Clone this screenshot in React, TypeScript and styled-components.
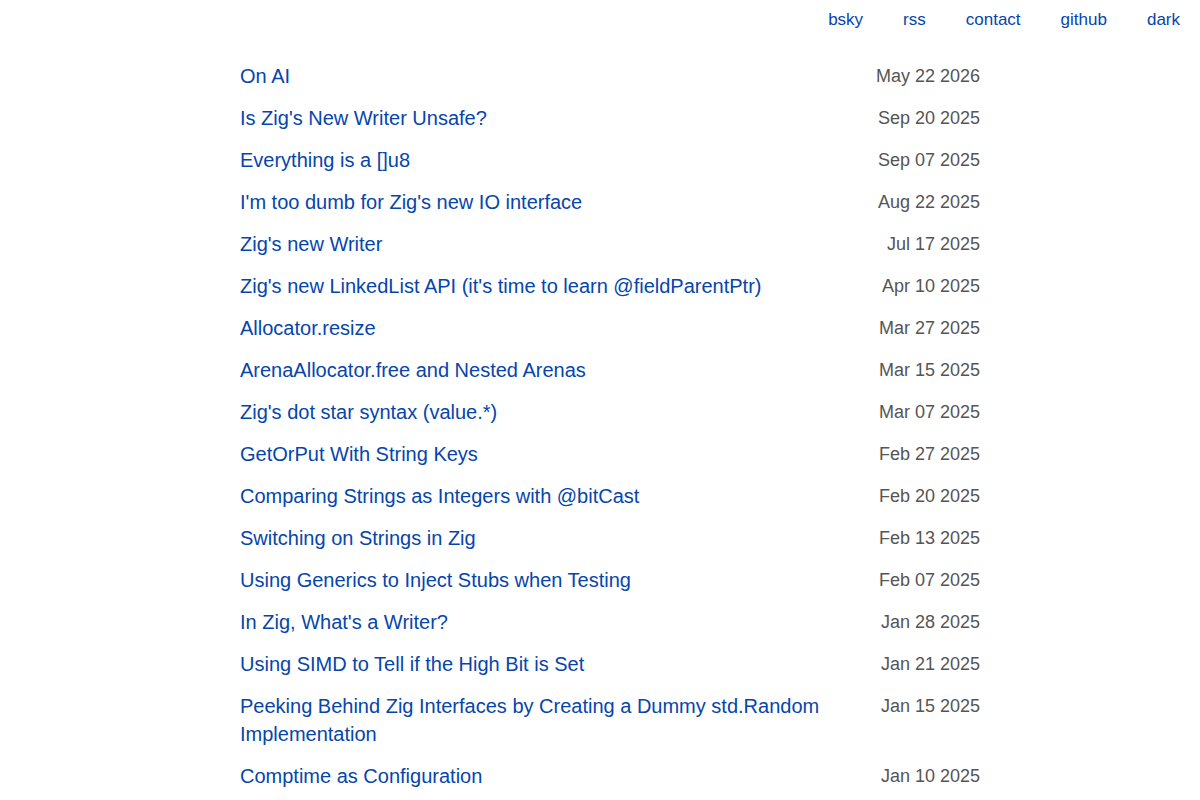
import styled, { createGlobalStyle } from "styled-components";

const GlobalStyle = createGlobalStyle`
    body {
        margin: 0;
        background: #fff;
        font-family: "Liberation Sans", Arial, sans-serif;
    }
    a {
        color: #0645ad;
        text-decoration: none;
    }
`

const Header = styled.header`
    display: flex;
    justify-content: flex-end;
    gap: 40px;
    padding: 9px 20px 7px;
    font-size: 17px;
    line-height: 22px;
`

const List = styled.ul`
    list-style: none;
    width: 740px;
    margin: 17px 0 0 240px;
    padding: 0;
`

const Row = styled.li`
    display: grid;
    grid-template-columns: 1fr auto;
    column-gap: 40px;
    align-items: start;
    padding: 7px 0;
    line-height: 28px;
`

const Title = styled.a`
    font-size: 20px;
`

const Date = styled.span`
    font-size: 18px;
    color: #555;
`

const posts: [string, string][] = [
    ["On AI", "May 22 2026"],
    ["Is Zig's New Writer Unsafe?", "Sep 20 2025"],
    ["Everything is a []u8", "Sep 07 2025"],
    ["I'm too dumb for Zig's new IO interface", "Aug 22 2025"],
    ["Zig's new Writer", "Jul 17 2025"],
    ["Zig's new LinkedList API (it's time to learn @fieldParentPtr)", "Apr 10 2025"],
    ["Allocator.resize", "Mar 27 2025"],
    ["ArenaAllocator.free and Nested Arenas", "Mar 15 2025"],
    ["Zig's dot star syntax (value.*)", "Mar 07 2025"],
    ["GetOrPut With String Keys", "Feb 27 2025"],
    ["Comparing Strings as Integers with @bitCast", "Feb 20 2025"],
    ["Switching on Strings in Zig", "Feb 13 2025"],
    ["Using Generics to Inject Stubs when Testing", "Feb 07 2025"],
    ["In Zig, What's a Writer?", "Jan 28 2025"],
    ["Using SIMD to Tell if the High Bit is Set", "Jan 21 2025"],
    ["Peeking Behind Zig Interfaces by Creating a Dummy std.Random Implementation", "Jan 15 2025"],
    ["Comptime as Configuration", "Jan 10 2025"],
]

export default function App() {
    return (
        <>
            <GlobalStyle />
            <Header>
                <a href="#">bsky</a>
                <a href="#">rss</a>
                <a href="#">contact</a>
                <a href="#">github</a>
                <a href="#">dark</a>
            </Header>
            <List>
                {posts.map(([title, date]) => (
                    <Row key={title}>
                        <Title href="#">{title}</Title>
                        <Date>{date}</Date>
                    </Row>
                ))}
            </List>
        </>
    )
}
